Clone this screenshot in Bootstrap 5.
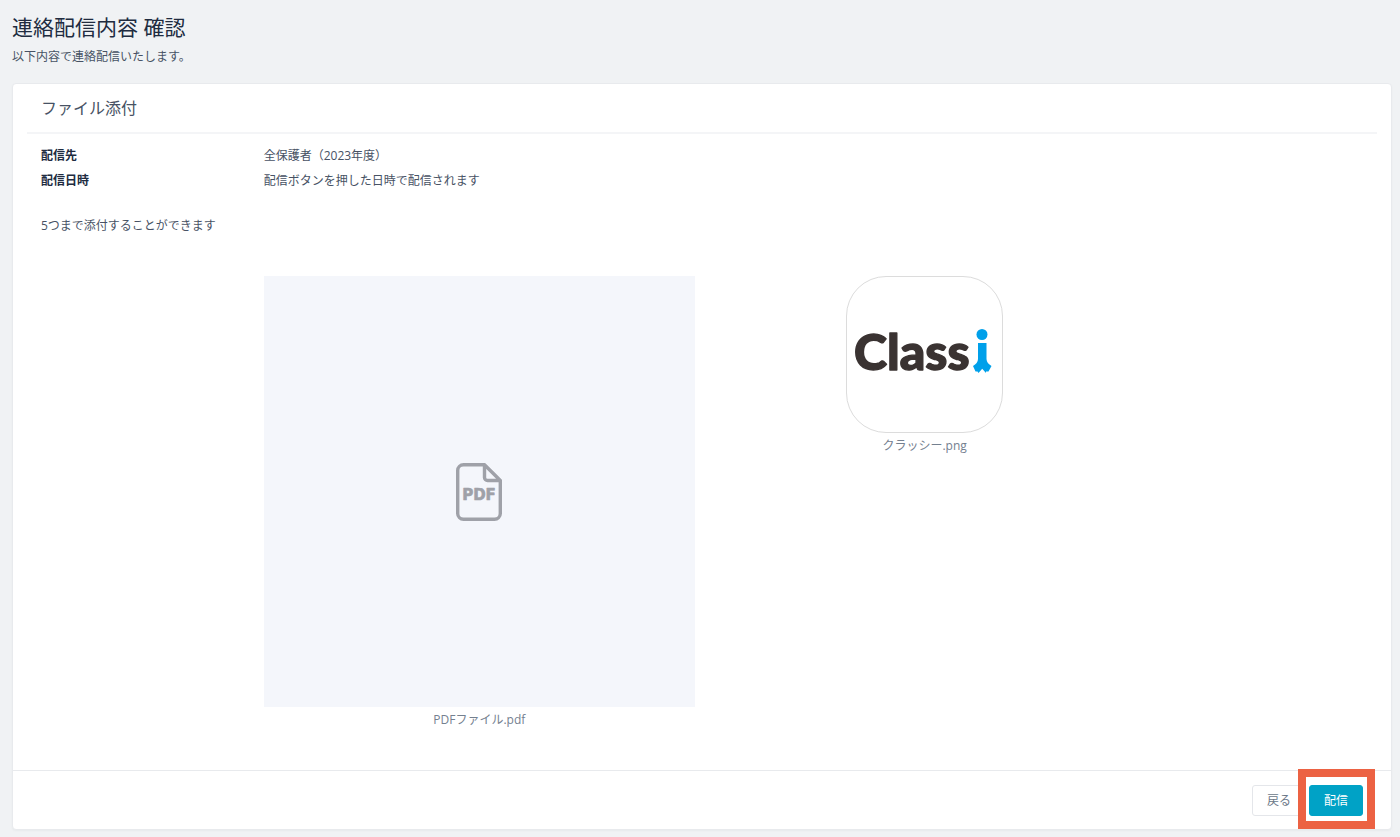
<!DOCTYPE html>
<html lang="ja">
<head>
<meta charset="utf-8">
<meta name="viewport" content="width=device-width, initial-scale=1">
<title>連絡配信内容 確認</title>
<link href="https://cdn.jsdelivr.net/npm/bootstrap@5.3.0/dist/css/bootstrap.min.css" rel="stylesheet">
<style>
  body { background: #f0f2f4; color: #475264; font: 12px/24px "Open Sans", "Noto Sans CJK JP", sans-serif; }
  .page { padding: 11px 8px 6px 12px; }
  .page-title { font-size: 21px; line-height: 32px; color: #202b3f; font-weight: 400; }
  .page-lead { margin: 2px 0 14px; }
  .panel { border: 1px solid #e8eaed; border-radius: 4px; box-shadow: 0 1px 2px rgba(30, 41, 59, .04); }
  .panel-head { margin: 0 14px; padding: 0 14px; font-size: 16px; line-height: 48px; font-weight: 400; color: #475264; border-bottom: 2px solid #f4f5f7; }
  .panel-main { padding: 10px 28px 37px; }
  .panel-foot { padding: 14px 28px 13px; gap: 3px; border-top: 1px solid #e8eaed; }
  .row { --bs-gutter-x: 14px; }
  .term { color: #202b3f; font-weight: 700; }
  .info { row-gap: 1px; }
  .note { margin: 21px 0 38px; }
  .file-name { color: #74808f; line-height: 26px; }
  .pdf-box { background: #f4f6fb; }
  .logo-tile { width: 157px; height: 157px; border: 1px solid #dcdcdc; border-radius: 40px; }
  .act { --bs-btn-font-size: 12px; --bs-btn-line-height: 21px; --bs-btn-padding-y: 4px; --bs-btn-padding-x: 14px; --bs-btn-border-radius: 3px; }
  .act-back { --bs-btn-color: #6b7788; --bs-btn-border-color: #e4e6ea; --bs-btn-bg: #fff; }
  .act-send { --bs-btn-color: #fff; --bs-btn-border-color: #00a2c6; --bs-btn-bg: #00a2c6; }
  .spotlight { position: absolute; inset: -16px -12px -13px -11px; border: 8px solid #ec6243; box-shadow: inset 0 0 0 3px #fff; pointer-events: none; }
</style>
</head>
<body>
<main class="page container-fluid">
  <h1 class="page-title mb-0">連絡配信内容 確認</h1>
  <p class="page-lead">以下内容で連絡配信いたします。</p>

  <section class="panel bg-white">
    <h2 class="panel-head">ファイル添付</h2>
    <div class="panel-main">
      <dl class="row info mb-0">
        <dt class="col-2 term">配信先</dt>
        <dd class="col-10 mb-0">全保護者（2023年度）</dd>
        <dt class="col-2 term">配信日時</dt>
        <dd class="col-10 mb-0">配信ボタンを押した日時で配信されます</dd>
      </dl>
      <p class="note">5つまで添付することができます</p>
      <div class="row">
        <figure class="col-4 offset-2 mb-0 text-center">
          <div class="pdf-box ratio ratio-1x1">
            <div class="d-flex align-items-center justify-content-center">
              <svg width="46" height="58" viewBox="0 0 46 58" role="img" aria-label="PDF" fill="none" stroke="#9fa1a8" stroke-width="3.4" stroke-linejoin="round">
                <path d="M28.500 1.700H7.500A5.800 5.800 0 0 0 1.700 7.500V50.500A5.800 5.800 0 0 0 7.500 56.300H38.500A5.800 5.800 0 0 0 44.300 50.500V17.500L28.500 1.700V14.500A3 3 0 0 0 31.500 17.500H44.300"/>
                <text x="23" y="37" text-anchor="middle" font-family="DejaVu Sans, sans-serif" font-weight="700" font-size="15" fill="#9fa1a8" stroke-width="0.6">PDF</text>
              </svg>
            </div>
          </div>
          <figcaption class="file-name">PDFファイル.pdf</figcaption>
        </figure>
        <figure class="col-4 mb-0 text-center">
          <div class="logo-tile d-flex align-items-center justify-content-center mx-auto">
            <svg width="155" height="155" viewBox="0 0 155 155" role="img" aria-label="Classi">
              <text x="7" y="93" font-family="Lato, sans-serif" font-weight="900" font-size="50" fill="#3a3332" stroke="#3a3332" stroke-width="1.4" stroke-linejoin="round">Class</text>
              <circle cx="135" cy="57.500" r="5.500" fill="#00a0ea"/>
              <path fill="#00a0ea" d="M131 66H139.500V82C139.500 85 141.500 87 144.500 89L141.500 94.500H139V96L135.200 91.800L131.500 96L130.500 94.500H128.500L126 89C129 87 131 85 131 82Z"/>
            </svg>
          </div>
          <figcaption class="file-name">クラッシー.png</figcaption>
        </figure>
      </div>
    </div>
    <div class="panel-foot d-flex justify-content-end">
      <button type="button" class="btn act act-back">戻る</button>
      <div class="position-relative">
        <button type="button" class="btn act act-send">配信</button>
        <span class="spotlight"></span>
      </div>
    </div>
  </section>
</main>
<script src="https://cdn.jsdelivr.net/npm/bootstrap@5.3.0/dist/js/bootstrap.bundle.min.js"></script>
</body>
</html>
